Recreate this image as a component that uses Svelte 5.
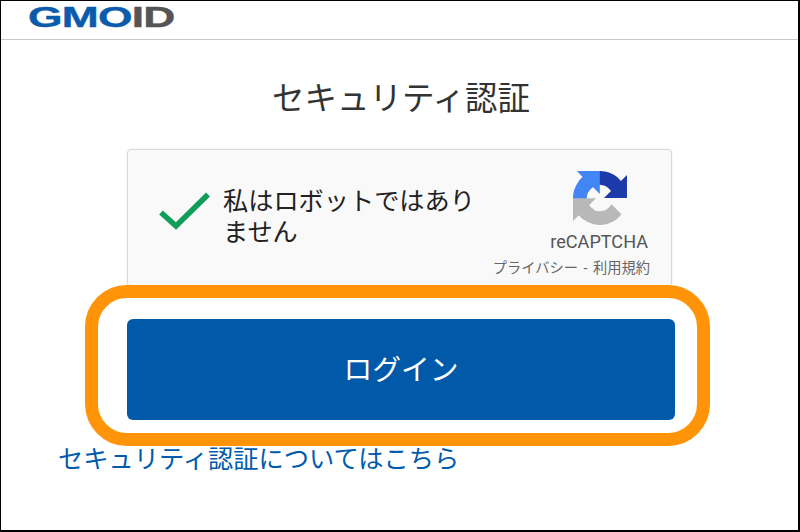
<script lang="ts">
    const title = "セキュリティ認証";
    const loginLabel = "ログイン";
    const helpLink = "セキュリティ認証についてはこちら";
</script>

<div class="page">
    <header class="topbar">
        <span class="logo"><span class="logo-gmo">GMO</span><span class="logo-id">ID</span></span>
    </header>

    <main class="content">
        <h1>{title}</h1>

        <div class="captcha">
            <svg class="check" viewBox="0 0 52 42" aria-hidden="true">
                <path d="M3 22.5 L18 36 L50 4.5" fill="none" stroke="#0f9d58" stroke-width="5.5" />
            </svg>
            <div class="captcha-label">私はロボットではありません</div>
            <div class="captcha-brand">
                <svg class="recaptcha-icon" viewBox="0 0 64 64" aria-hidden="true">
                    <path d="M64 31.955l-.033-1.37V4.687l-7.16 7.16C50.948 4.674 42.033.093 32.05.093c-10.4 0-19.622 4.96-25.458 12.64l11.736 11.86a15.55 15.55 0 0 1 4.754-5.334c2.05-1.6 4.952-2.906 8.968-2.906.485 0 .86.057 1.135.163 4.976.393 9.29 3.14 11.83 7.125l-8.307 8.307c10.522-.04 22.408-.066 27.29.006" fill="#1c3aa9" />
                    <path d="M31.862.094l-1.37.033H4.594l7.16 7.16C4.58 13.147 0 22.06 0 32.046c0 10.4 4.96 19.622 12.64 25.458l11.86-11.736a15.55 15.55 0 0 1-5.334-4.754c-1.6-2.05-2.906-4.952-2.906-8.968 0-.485.057-.86.163-1.135.393-4.976 3.14-9.29 7.125-11.83l8.307 8.307c-.04-10.522-.066-22.408.006-27.29" fill="#4285f4" />
                    <path d="M.001 32.045l.033 1.37v25.898l7.16-7.16c5.86 7.173 14.774 11.754 24.76 11.754 10.4 0 19.622-4.96 25.458-12.64l-11.86-11.736a15.55 15.55 0 0 1-4.754 5.334c-2.05 1.6-4.952 2.906-8.968 2.906-.485 0-.86-.057-1.135-.163-4.976-.393-9.29-3.14-11.83-7.125l8.307-8.307c-10.522.04-22.408.066-27.29-.006" fill="#b8b8b8" />
                </svg>
                <div class="brand-name">reCAPTCHA</div>
                <div class="brand-links">プライバシー - 利用規約</div>
            </div>
        </div>

        <div class="login-wrap">
            <button class="login" type="button">{loginLabel}</button>
            <div class="ring"></div>
        </div>

        <a class="help" href="#help">{helpLink}</a>
    </main>
</div>

<style>
    :global(body) {
        margin: 0;
        background: #fff;
    }
    .page {
        box-sizing: border-box;
        width: 800px;
        height: 532px;
        border-style: solid;
        border-color: #000;
        border-width: 1px 2px 2px 1px;
        background: #fff;
        font-family: "Roboto", "Noto Sans CJK JP", sans-serif;
        overflow: hidden;
    }
    .topbar {
        box-sizing: border-box;
        height: 39px;
        border-bottom: 1px solid #c8c8c8;
        padding-left: 27px;
    }
    .logo {
        display: inline-block;
        font-family: "Liberation Sans", sans-serif;
        font-size: 29px;
        font-weight: 700;
        line-height: 33px;
        letter-spacing: -0.5px;
        transform: scaleX(1.53);
        transform-origin: left center;
        -webkit-text-stroke: 0.4px currentColor;
    }
    .logo-gmo {
        color: #0a5bab;
    }
    .logo-id {
        color: #555;
    }
    .content {
        display: flex;
        flex-direction: column;
        align-items: flex-start;
        width: 548px;
        padding-left: 126px;
    }
    h1 {
        align-self: stretch;
        margin: 39px 0 0;
        font-size: 32.5px;
        font-weight: 400;
        line-height: 40px;
        text-align: center;
        color: #333;
    }
    .captcha {
        box-sizing: border-box;
        display: flex;
        align-items: flex-start;
        width: 545px;
        height: 138px;
        margin-top: 30px;
        border: 1px solid #d8d8d8;
        border-radius: 4px;
        background: #f9f9f9;
        box-shadow: 0 0 3px rgba(0, 0, 0, 0.08);
    }
    .check {
        width: 52px;
        height: 42px;
        margin: 40px 0 0 30px;
        flex: none;
    }
    .captcha-label {
        width: 256px;
        margin: 36px 0 0 13px;
        font-size: 25.2px;
        line-height: 31px;
        color: #222;
    }
    .captcha-brand {
        display: flex;
        flex-direction: column;
        align-items: flex-end;
        flex: 1;
        padding-right: 21px;
    }
    .recaptcha-icon {
        width: 54px;
        height: 54px;
        margin: 21px 23px 0 0;
    }
    .brand-name {
        margin: 5px 2px 0 0;
        font-size: 18.1px;
        line-height: 24px;
        color: #555;
    }
    .brand-links {
        margin-top: 5px;
        font-size: 14.25px;
        line-height: 18px;
        word-spacing: 2px;
        color: #666;
        white-space: nowrap;
    }
    .login-wrap {
        position: relative;
        width: 548px;
        margin-top: 32px;
    }
    .login {
        display: block;
        width: 100%;
        height: 101px;
        padding: 0 0 4px;
        border: 0;
        border-radius: 6px;
        background: #0059a9;
        color: #fff;
        font: inherit;
        font-size: 28.8px;
    }
    .ring {
        position: absolute;
        inset: -34px -35px -26px -42px;
        border: 13px solid #ff9408;
        border-radius: 42px;
    }
    .help {
        margin: 22px 0 0 -69px;
        font-size: 25.25px;
        line-height: 36px;
        color: #005bac;
        text-decoration: none;
        white-space: nowrap;
    }
</style>
